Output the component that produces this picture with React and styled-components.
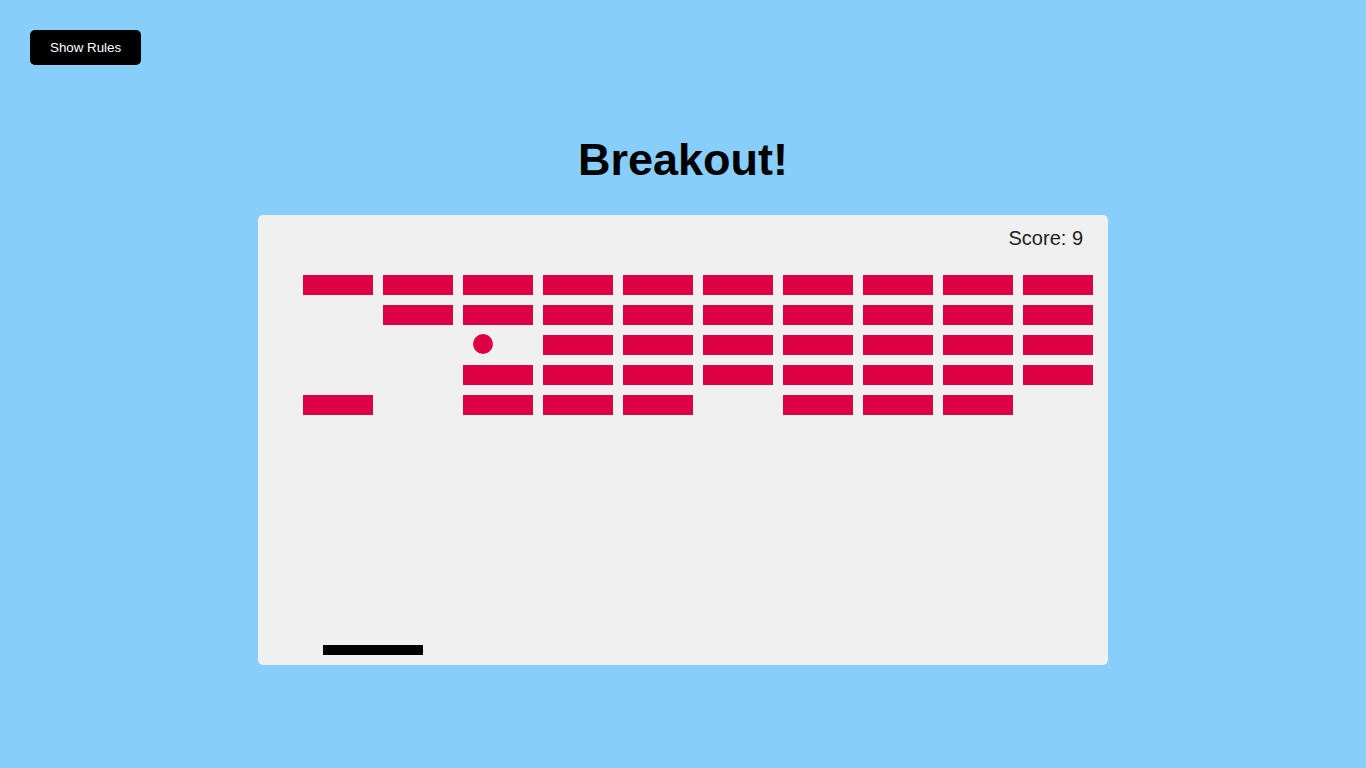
import React from "react";
import styled, { createGlobalStyle } from "styled-components";

const GlobalStyle = createGlobalStyle`
  * {
    box-sizing: border-box;
  }
  body {
    margin: 0;
    background: #87cefa;
    font-family: "Liberation Sans", Arial, sans-serif;
  }
`;

const Page = styled.div`
  min-height: 100vh;
  padding: 30px;
  display: flex;
  flex-direction: column;
`;

const RulesButton = styled.button`
  align-self: flex-start;
  background: #000;
  color: #fff;
  border: 0;
  border-radius: 5px;
  padding: 10px 20px;
  font-family: "Liberation Sans", Arial, sans-serif;
  font-size: 13.33px;
  line-height: 15px;
  cursor: pointer;
`;

const Title = styled.h1`
  margin: 71px 0 31px;
  text-align: center;
  font-size: 45px;
  line-height: 48px;
  font-weight: 700;
  color: #000;
`;

const Board = styled.div`
  position: relative;
  align-self: center;
  width: 850px;
  height: 450px;
  background: #f0f0f0;
  border-radius: 5px;
  padding-top: 13px;
`;

const Score = styled.div`
  text-align: right;
  padding-right: 25px;
  font-size: 20px;
  line-height: 20px;
  color: #222;
  margin-bottom: 27px;
`;

const Bricks = styled.div`
  display: grid;
  grid-template-columns: repeat(10, 70px);
  grid-auto-rows: 20px;
  gap: 10px;
  margin-left: 45px;
`;

const Brick = styled.div`
  background: ${(props) => (props.visible ? "#dd0044" : "transparent")};
`;

const Ball = styled.div`
  position: absolute;
  width: 20px;
  height: 20px;
  border-radius: 50%;
  background: #dd0044;
`;

const Paddle = styled.div`
  position: absolute;
  width: 100px;
  height: 10px;
  background: #000;
`;

// rows of bricks, 1 = still standing
const layout = [
  [1, 1, 1, 1, 1, 1, 1, 1, 1, 1],
  [0, 1, 1, 1, 1, 1, 1, 1, 1, 1],
  [0, 0, 0, 1, 1, 1, 1, 1, 1, 1],
  [0, 0, 1, 1, 1, 1, 1, 1, 1, 1],
  [1, 0, 1, 1, 1, 0, 1, 1, 1, 0],
];

const App = () => {
  const ball = { x: 225, y: 129 };
  const paddle = { x: 65, y: 430 };

  return (
    <>
      <GlobalStyle />
      <Page>
        <RulesButton>Show Rules</RulesButton>
        <Title>Breakout!</Title>
        <Board>
          <Score>Score: 9</Score>
          <Bricks>
            {layout.map((row, r) =>
              row.map((b, c) => <Brick key={`${r}-${c}`} visible={b === 1} />)
            )}
          </Bricks>
          <Ball style={{ left: ball.x - 10, top: ball.y - 10 }} />
          <Paddle style={{ left: paddle.x, top: paddle.y }} />
        </Board>
      </Page>
    </>
  );
};

export default App;
